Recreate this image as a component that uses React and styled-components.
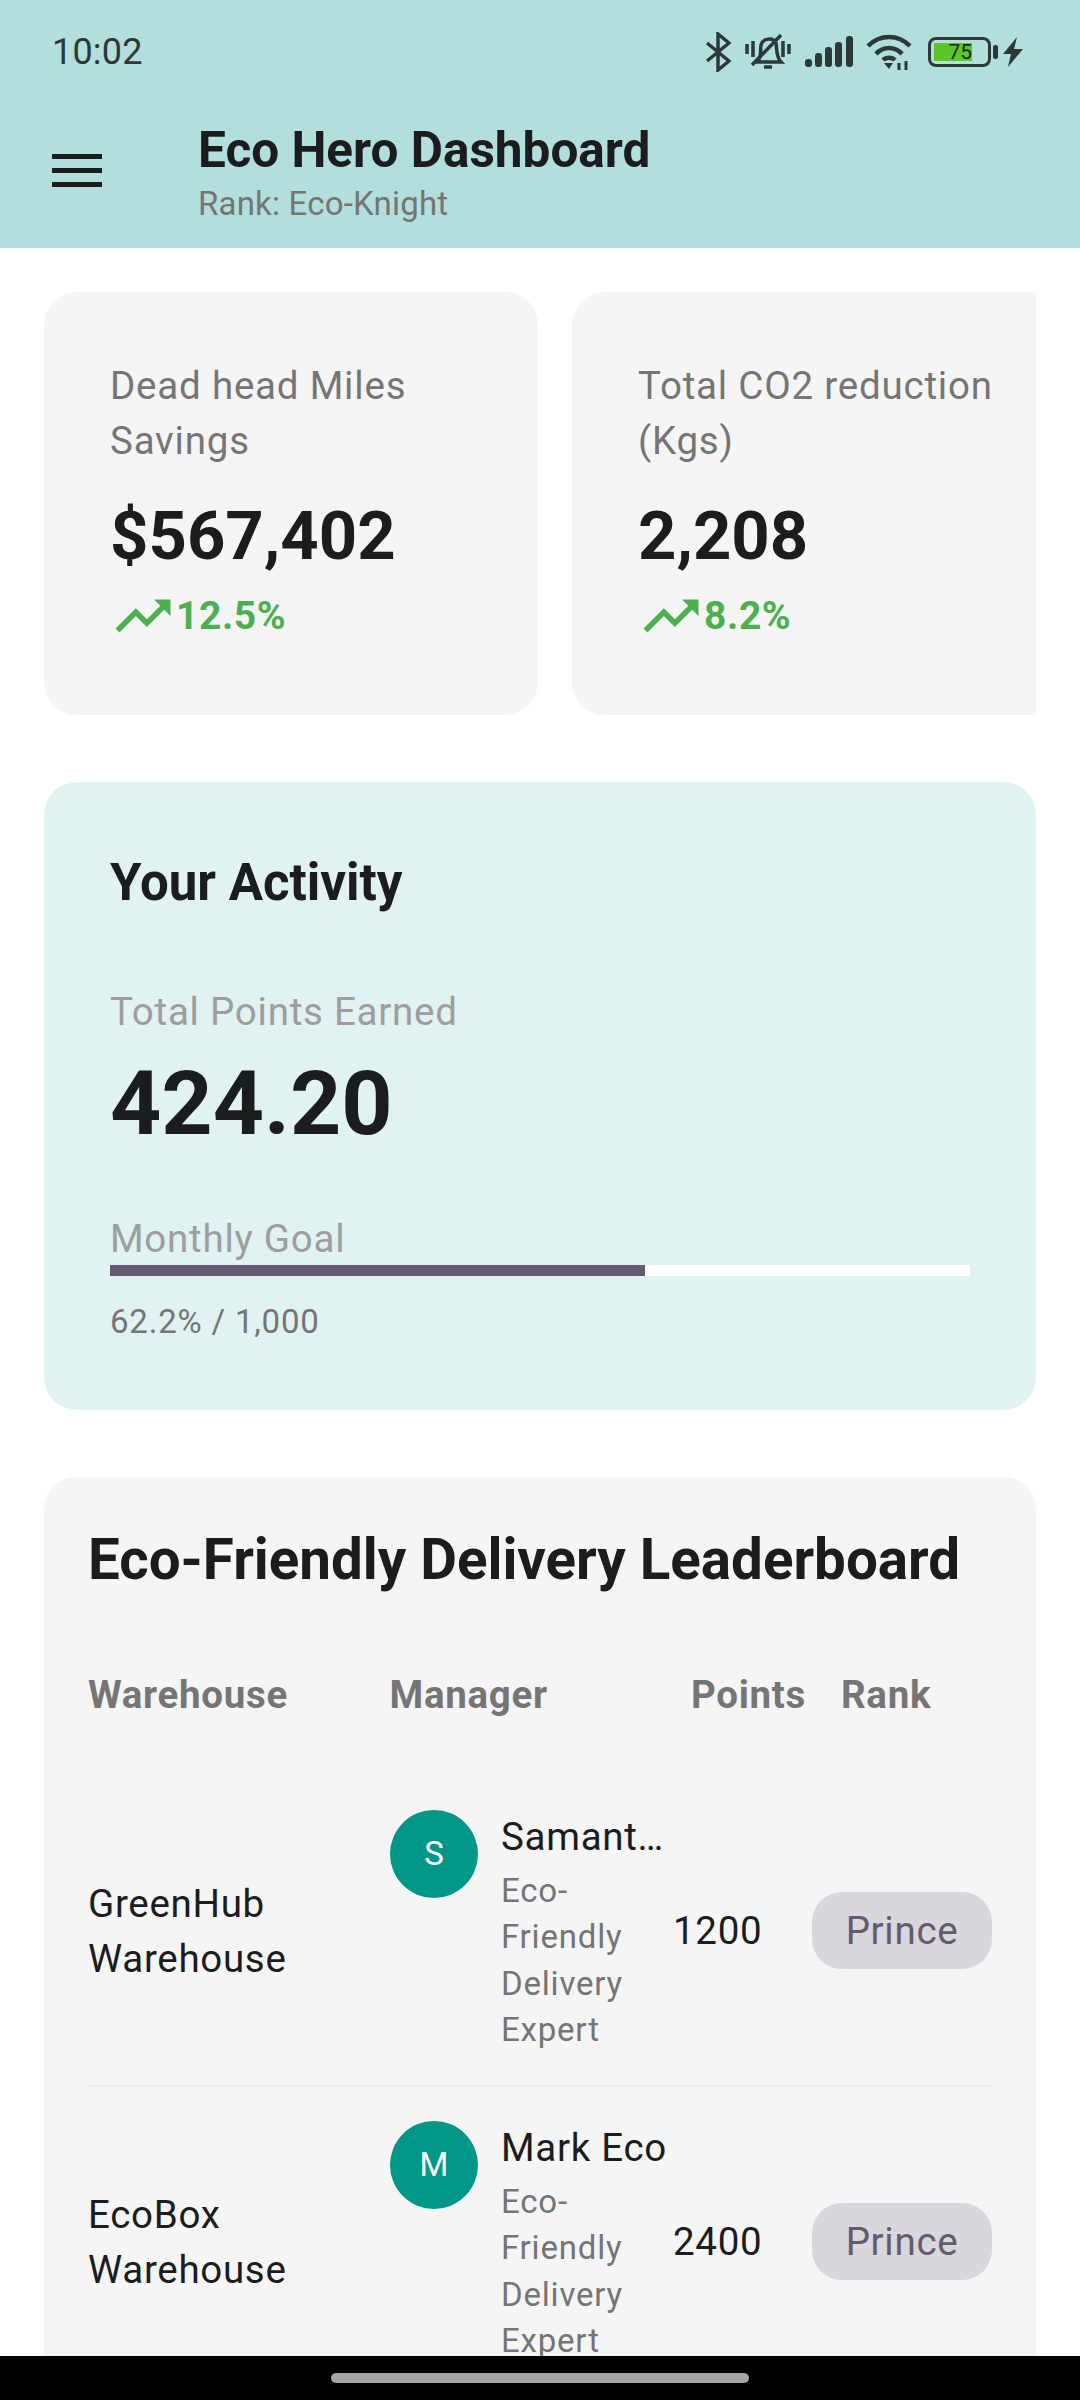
import styled, { createGlobalStyle } from 'styled-components'

const Global = createGlobalStyle`
  html, body { margin: 0; padding: 0; background: #fff; }
  body { font-family: Roboto, "Liberation Sans", sans-serif; color: #1a1c1e; }
`

const Screen = styled.div`
  width: 1080px;
  height: 2400px;
  display: flex;
  flex-direction: column;
  overflow: hidden;
  background: #fff;
`

const Header = styled.header`
  background: #b2dfdb;
  height: 248px;
  flex: none;
  display: flex;
  flex-direction: column;
`

const StatusBar = styled.div`
  height: 104px;
  padding: 0 57px 0 52px;
  display: flex;
  align-items: center;
  justify-content: space-between;
  color: #2b3a38;
`

const Time = styled.span`
  font-size: 36px;
  letter-spacing: 0.2px;
`

const StatusIcons = styled.div`
  display: flex;
  align-items: center;
  gap: 0;
`

const Icon = styled.svg`
  display: block;
  flex: none;
  margin-left: ${(p) => p.$gap || 0}px;
`

const BatteryBox = styled.div`
  width: 63px;
  height: 30px;
  margin-left: 15px;
  border: 3px solid #2b3a38;
  border-radius: 8px;
  box-sizing: border-box;
  padding: 3px;
  display: flex;
`

const BatteryFill = styled.div`
  width: 38px;
  background: #5cc52a;
  color: #1c2b1c;
  font-size: 21px;
  line-height: 18px;
  text-align: right;
`

const AppBar = styled.div`
  flex: 1;
  display: flex;
  align-items: flex-start;
  padding-left: 52px;
`

const Burger = styled.div`
  width: 50px;
  height: 33px;
  margin-top: 50px;
  flex: none;
  display: flex;
  flex-direction: column;
  justify-content: space-between;
  span { display: block; height: 5px; background: #1a1c1e; }
`

const TitleBlock = styled.div`
  margin-left: 96px;
  margin-top: 18px;
`

const Title = styled.div`
  font-size: 49.5px;
  font-weight: 700;
  line-height: 56px;
`

const Subtitle = styled.div`
  font-size: 33px;
  line-height: 44px;
  letter-spacing: 0.2px;
  color: #757575;
  margin-top: 4px;
`

const Body = styled.main`
  flex: 1;
  min-height: 0;
  overflow: hidden;
  padding: 44px 44px 0;
  display: flex;
  flex-direction: column;
  gap: 67px;
`

const StatRow = styled.div`
  display: flex;
  gap: 34px;
  height: 423px;
  overflow: hidden;
  flex: none;
`

const StatCard = styled.div`
  width: 494px;
  flex: none;
  box-sizing: border-box;
  background: #f5f5f5;
  border-radius: 33px;
  padding: 66px 0 0 66px;
  box-shadow: 0 2px 12px rgba(0, 0, 0, 0.015);
`

const StatLabel = styled.div`
  font-size: 38.5px;
  line-height: 55px;
  letter-spacing: 0.8px;
  color: #757575;
  white-space: pre-line;
`

const StatValue = styled.div`
  font-size: 67px;
  font-weight: 700;
  line-height: 78px;
  margin-top: 29px;
`

const Trend = styled.div`
  display: flex;
  align-items: center;
  color: #4caf50;
  font-size: 39px;
  font-weight: 700;
  line-height: 66px;
  margin-top: 8px;
  letter-spacing: 0.6px;
`

const ActivityCard = styled.section`
  flex: none;
  height: 628px;
  box-sizing: border-box;
  background: #e0f2f1;
  border-radius: 33px;
  padding: 69px 66px 0;
`

const ActivityTitle = styled.h2`
  margin: 0;
  font-size: 51px;
  font-weight: 700;
  line-height: 64px;
`

const FadedLabel = styled.div`
  font-size: 38.5px;
  line-height: 50px;
  letter-spacing: 0.75px;
  color: #9e9e9e;
  margin-top: ${(p) => p.$top}px;
`

const BigPoints = styled.div`
  font-size: 89.5px;
  font-weight: 700;
  line-height: 100px;
  margin-top: 17px;
`

const Progress = styled.div`
  height: 11px;
  background: #fff;
  margin-top: 1px;
`

const ProgressFill = styled.div`
  height: 100%;
  background: #655b71;
`

const ProgressNote = styled.div`
  font-size: 33px;
  line-height: 44px;
  letter-spacing: 0.8px;
  color: #757575;
  margin-top: 24px;
`

const Board = styled.section`
  flex: none;
  box-sizing: border-box;
  background: #f5f5f5;
  border-radius: 33px;
  padding: 47px 44px 0;
  box-shadow: 0 2px 14px rgba(0, 0, 0, 0.025);
`

const BoardTitle = styled.h2`
  margin: 0;
  font-size: 56.5px;
  font-weight: 700;
  line-height: 72px;
`

const HeadRow = styled.div`
  display: grid;
  grid-template-columns: 301.5px 301.5px 150px auto;
  margin: 74px 0 56px;
  font-size: 38.5px;
  font-weight: 700;
  line-height: 50px;
  letter-spacing: 0.7px;
  color: #757575;
`

const Row = styled.div`
  display: grid;
  grid-template-columns: 302px 283px 139px 180px;
  align-items: center;
  height: 311px;
  border-bottom: 2px solid #eee;
  box-sizing: border-box;
`

const Warehouse = styled.div`
  font-size: 38.5px;
  line-height: 55px;
  letter-spacing: 0.7px;
  white-space: pre-line;
`

const Manager = styled.div`
  display: flex;
  gap: 23px;
  align-items: flex-start;
`

const Avatar = styled.div`
  width: 88px;
  height: 88px;
  margin-top: 2px;
  border-radius: 50%;
  background: #009688;
  color: #fff;
  font-size: 33px;
  display: flex;
  align-items: center;
  justify-content: center;
  flex: none;
`

const ManagerText = styled.div`
  width: 170px;
  padding-top: 1px;
`

const ManagerName = styled.div`
  font-size: 38.5px;
  line-height: 55px;
  letter-spacing: 0.7px;
  white-space: nowrap;
`

const ManagerRole = styled.div`
  font-size: 33px;
  line-height: 46.5px;
  letter-spacing: 0.8px;
  margin-top: 4px;
  color: #757575;
  white-space: pre-line;
`

const PointsCell = styled.div`
  font-size: 38.5px;
  letter-spacing: 0.7px;
`

const Chip = styled.div`
  height: 77px;
  border-radius: 30px;
  background: #d9d6dc;
  color: #625b71;
  font-size: 38.5px;
  letter-spacing: 0.7px;
  display: flex;
  align-items: center;
  justify-content: center;
`

const GestureBar = styled.div`
  height: 44px;
  flex: none;
  background: #000;
  display: flex;
  align-items: center;
  justify-content: center;
  span { display: block; width: 418px; height: 10px; border-radius: 5px; background: #a6a6a6; }
`

const TrendIcon = () => (
  <Icon width="66" height="66" viewBox="0 0 24 24" fill="#4caf50">
    <path d="M16 6l2.29 2.29-4.88 4.88-4-4L2 16.59 3.41 18l6-6 4 4 6.3-6.29L22 12V6z" />
  </Icon>
)

const stats = [
  { label: 'Dead head Miles\nSavings', value: '$567,402', trend: '12.5%' },
  { label: 'Total CO2 reduction\n(Kgs)', value: '2,208', trend: '8.2%' },
]

const rows = [
  { warehouse: 'GreenHub\nWarehouse', initial: 'S', name: 'Samant…', points: 1200 },
  { warehouse: 'EcoBox\nWarehouse', initial: 'M', name: 'Mark Eco', points: 2400 },
]

export default function App() {
  return (
    <>
      <Global />
      <Screen>
        <Header>
          <StatusBar>
            <Time>10:02</Time>
            <StatusIcons>
              <Icon width="26" height="40" viewBox="0 0 26 40" fill="none" stroke="#2b3a38" strokeWidth="3.5">
                <path d="M2 11 L24 29 L13 38 V2 L24 11 L2 29" />
              </Icon>
              <Icon $gap={14} width="46" height="40" viewBox="0 0 46 40" fill="none" stroke="#2b3a38" strokeWidth="3.5">
                <path d="M2 12 V22 M8 9 V25 M38 9 V25 M44 12 V22" />
                <path d="M13 29 C17 24 15 18 16 13 C18 6 28 5 31 11 C32 18 31 25 36 30 H10" />
                <path d="M19 35 H27" />
                <path d="M7 33 L36 3" />
              </Icon>
              <Icon $gap={14} width="48" height="32" viewBox="0 0 48 32" fill="#2b3a38">
                <rect x="0" y="23" width="7" height="8" rx="3" />
                <rect x="10" y="17" width="7" height="14" rx="3" />
                <rect x="20" y="11" width="7" height="20" rx="3" />
                <rect x="30" y="6" width="7" height="25" rx="3" />
                <rect x="41" y="0" width="7" height="31" rx="3" />
              </Icon>
              <Icon $gap={13} width="47" height="36" viewBox="0 0 47 36" fill="none" stroke="#2b3a38" strokeWidth="4.5">
                <path d="M2 12 C14 0 32 0 44 12" />
                <path d="M10 20 C17 12 29 12 36 20" />
                <path d="M17 26 C20 23 26 23 29 26" />
                <path d="M18 29 L23 35 L27 29 Z" fill="#2b3a38" stroke="none" />
                <path d="M33 36 V29 M40 36 V27" strokeWidth="3" />
              </Icon>
              <BatteryBox>
                <BatteryFill>75</BatteryFill>
              </BatteryBox>
              <Icon $gap={2} width="5" height="14" viewBox="0 0 5 14" fill="#2b3a38">
                <rect width="5" height="14" rx="2" />
              </Icon>
              <Icon $gap={5} width="20" height="30" viewBox="0 0 20 30" fill="#2b3a38">
                <path d="M14 0 L0 17 H8 L5 30 L20 12 H11 Z" />
              </Icon>
            </StatusIcons>
          </StatusBar>
          <AppBar>
            <Burger>
              <span />
              <span />
              <span />
            </Burger>
            <TitleBlock>
              <Title>Eco Hero Dashboard</Title>
              <Subtitle>Rank: Eco-Knight</Subtitle>
            </TitleBlock>
          </AppBar>
        </Header>
        <Body>
          <StatRow>
            {stats.map((s) => (
              <StatCard key={s.value}>
                <StatLabel>{s.label}</StatLabel>
                <StatValue>{s.value}</StatValue>
                <Trend>
                  <TrendIcon />
                  {s.trend}
                </Trend>
              </StatCard>
            ))}
          </StatRow>
          <ActivityCard>
            <ActivityTitle>Your Activity</ActivityTitle>
            <FadedLabel $top={72}>Total Points Earned</FadedLabel>
            <BigPoints>424.20</BigPoints>
            <FadedLabel $top={60}>Monthly Goal</FadedLabel>
            <Progress>
              <ProgressFill style={{ width: '62.2%' }} />
            </Progress>
            <ProgressNote>62.2% / 1,000</ProgressNote>
          </ActivityCard>
          <Board>
            <BoardTitle>Eco-Friendly Delivery Leaderboard</BoardTitle>
            <HeadRow>
              <span>Warehouse</span>
              <span>Manager</span>
              <span>Points</span>
              <span>Rank</span>
            </HeadRow>
            {rows.map((r) => (
              <Row key={r.name}>
                <Warehouse>{r.warehouse}</Warehouse>
                <Manager>
                  <Avatar>{r.initial}</Avatar>
                  <ManagerText>
                    <ManagerName>{r.name}</ManagerName>
                    <ManagerRole>{'Eco-\nFriendly\nDelivery\nExpert'}</ManagerRole>
                  </ManagerText>
                </Manager>
                <PointsCell>{r.points}</PointsCell>
                <Chip>Prince</Chip>
              </Row>
            ))}
          </Board>
        </Body>
        <GestureBar>
          <span />
        </GestureBar>
      </Screen>
    </>
  )
}
